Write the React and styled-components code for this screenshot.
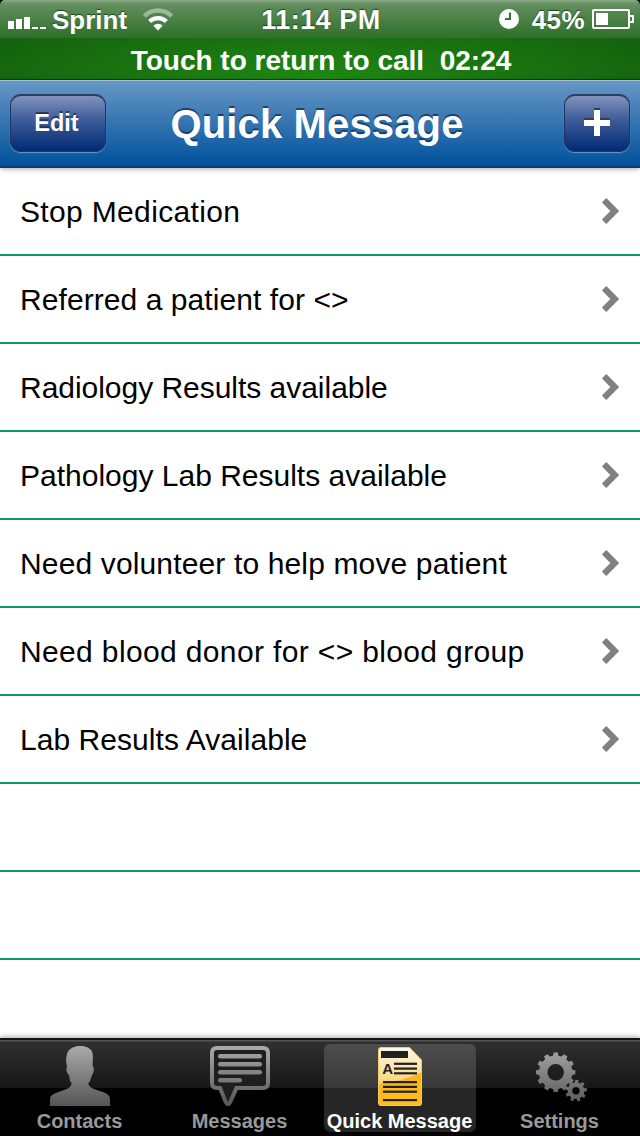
import React from "react";
import styled, { createGlobalStyle } from "styled-components";

const messages = [
  { text: "Stop Medication", tracking: 0.34 },
  { text: "Referred a patient for <>", tracking: 0.07 },
  { text: "Radiology Results available", tracking: -0.03 },
  { text: "Pathology Lab Results available", tracking: 0 },
  { text: "Need volunteer to help move patient", tracking: 0.14 },
  { text: "Need blood donor for <> blood group", tracking: 0.36 },
  { text: "Lab Results Available", tracking: 0.05 },
  { text: "" },
  { text: "" },
  { text: "" },
];

const tabs = [
  { label: "Contacts", Icon: ContactIcon },
  { label: "Messages", Icon: MessagesIcon },
  { label: "Quick Message", Icon: DocumentIcon, active: true },
  { label: "Settings", Icon: GearsIcon },
];

export default function App() {
  return (
    <>
      <GlobalStyle />
      <Screen>
        <StatusBar>
          <Carrier>
            <SignalIcon />
            <StatusText>Sprint</StatusText>
            <WifiIcon />
          </Carrier>
          <StatusText $size={27} $tracking={0.5}>11:14 PM</StatusText>
          <Power>
            <ClockIcon />
            <StatusText $tracking={0.4}>45%</StatusText>
            <BatteryIcon />
          </Power>
        </StatusBar>
        <CallBar>Touch to return to call&nbsp; 02:24</CallBar>
        <NavBar>
          <NavButton $width={96}>Edit</NavButton>
          <Title>Quick Message</Title>
          <NavButton $width={66} aria-label="Add">
            <PlusIcon />
          </NavButton>
        </NavBar>
        <List>
          {messages.map(({ text, tracking }, i) => (
            <Row key={i}>
              <RowText $tracking={tracking}>{text}</RowText>
              {text && <Chevron />}
            </Row>
          ))}
        </List>
        <TabBar>
          {tabs.map(({ label, Icon, active }) => (
            <Tab key={label} $active={active}>
              <Icon />
              <TabLabel $active={active}>{label}</TabLabel>
            </Tab>
          ))}
        </TabBar>
      </Screen>
    </>
  );
}

function SignalIcon() {
  return (
    <svg width="38" height="14" viewBox="0 0 38 14" fill="#fff">
      <rect x="0" y="6" width="6" height="8" />
      <rect x="8" y="4" width="6" height="10" />
      <rect x="16" y="2" width="6" height="12" />
      <rect x="24" y="12" width="6" height="2" />
      <rect x="32" y="12" width="6" height="2" />
    </svg>
  );
}

function WifiIcon() {
  return (
    <svg width="32" height="24" viewBox="0 0 32 24" fill="none">
      <path d="M2.3 9.2 A19.4 19.4 0 0 1 29.7 9.2" stroke="#fff" strokeOpacity=".42" strokeWidth="4.4" />
      <path d="M7.6 14.6 A12 12 0 0 1 24.4 14.6" stroke="#fff" strokeWidth="4.2" />
      <path d="M11.3 18.8 A6.6 6.6 0 0 1 20.7 18.8 L16 23.6 Z" fill="#fff" />
    </svg>
  );
}

function ClockIcon() {
  return (
    <svg width="20" height="20" viewBox="0 0 20 20">
      <circle cx="10" cy="10" r="10" fill="#fff" />
      <path d="M11 3.5 V10 H6" stroke="#3c6f38" strokeWidth="2" fill="none" />
    </svg>
  );
}

function BatteryIcon() {
  return (
    <svg width="42" height="20" viewBox="0 0 42 20" fill="none">
      <rect x="1" y="1" width="36" height="18" rx="1" stroke="#fff" strokeWidth="2" />
      <path d="M38 7 H41 V13 H38" stroke="#fff" strokeWidth="2" />
      <rect x="4" y="4" width="12" height="12" fill="#fff" />
    </svg>
  );
}

function PlusIcon() {
  return (
    <svg width="26" height="28" viewBox="0 0 26 28">
      <path d="M10 0 H16 V10 H26 V16 H16 V26 H10 V16 H0 V10 H10 Z" fill="#363e55" />
      <path d="M10 2 H16 V12 H26 V18 H16 V28 H10 V18 H0 V12 H10 Z" fill="#fff" />
    </svg>
  );
}

function Chevron() {
  return (
    <svg width="18" height="26" viewBox="0 0 18 26" fill="none">
      <path d="M2.1 2.2 L12.8 13 L2.1 23.8" stroke="#808080" strokeWidth="6.2" />
    </svg>
  );
}

function GreyGradient({ id }) {
  return (
    <linearGradient id={id} gradientUnits="userSpaceOnUse" x1="0" y1="0" x2="0" y2="60">
      <stop offset="0" stopColor="#aaa" />
      <stop offset="1" stopColor="#555" />
    </linearGradient>
  );
}

function ContactIcon() {
  return (
    <TabIcon viewBox="0 0 60 60">
      <defs>
        <GreyGradient id="contactFill" />
      </defs>
      <path
        fill="url(#contactFill)"
        d="M30 0 C36 0 39 2 41 4 C43 6 43 9 42.8 14 L42.6 20 C44.5 21.5 44.2 25 42.5 28.5 C41.5 29.5 41.5 31 40.5 33.5 L40 35.5 L38.2 37 C38.5 40 41 42 44 43 L54 46.5 C58 48 60 50 60 53 V60 H0 V53 C0 50 2 48.5 6 47 L16 43.3 C19.5 42 21.5 40 21.6 37 L20 35 L19.2 29.5 C16.5 27 15.7 23.5 17 20.5 C15.5 15 16 10 17.5 6.5 C19.5 2.5 24 0 30 0 Z"
      />
    </TabIcon>
  );
}

function MessagesIcon() {
  return (
    <TabIcon viewBox="0 0 60 60">
      <defs>
        <GreyGradient id="messageStroke" />
      </defs>
      <path
        d="M7 2 H53 Q58 2 58 7 V37 Q58 42 53 42 H26.5 L20 56.5 Q18 60 16 56.5 L10 42 H7 Q2 42 2 37 V7 Q2 2 7 2 Z"
        fill="#1e1e1e"
        stroke="url(#messageStroke)"
        strokeWidth="4"
      />
      <g fill="url(#messageStroke)">
        <rect x="8" y="8" width="44" height="4.4" rx="2.2" />
        <rect x="8" y="16" width="44" height="4.4" rx="2.2" />
        <rect x="8" y="24" width="44" height="4.4" rx="2.2" />
        <rect x="8" y="32" width="24" height="4.4" rx="2.2" />
      </g>
    </TabIcon>
  );
}

function DocumentIcon() {
  return (
    <TabIcon viewBox="0 0 60 60">
      <defs>
        <linearGradient id="paper" x1="0" y1="0" x2="0" y2="1">
          <stop offset="0" stopColor="#fffaf0" />
          <stop offset=".6" stopColor="#fbd67c" />
        </linearGradient>
        <linearGradient id="paperLow" x1="0" y1="0" x2="0" y2="1">
          <stop offset="0" stopColor="#fdb515" />
          <stop offset="1" stopColor="#ffbd1c" />
        </linearGradient>
        <clipPath id="page">
          <path d="M11 1.5 H39.5 L51.5 14 V57 Q51.5 59.5 49 59.5 H11 Q8.5 59.5 8.5 57 V4 Q8.5 1.5 11 1.5 Z" />
        </clipPath>
      </defs>
      <g clipPath="url(#page)">
        <rect width="60" height="60" fill="url(#paper)" />
        <path d="M8 38 Q34 35 52 26 V60 H8 Z" fill="url(#paperLow)" />
      </g>
      <path
        d="M11 1.5 H39.5 L51.5 14 V57 Q51.5 59.5 49 59.5 H11 Q8.5 59.5 8.5 57 V4 Q8.5 1.5 11 1.5 Z"
        fill="none"
        stroke="#f3c96b"
        strokeWidth="1"
      />
      <rect x="11" y="5" width="27" height="7" fill="#222" />
      <g fill="#222">
        <rect x="24" y="16.7" width="23" height="2.2" />
        <rect x="24" y="21.5" width="23" height="2.2" />
        <rect x="24" y="26.2" width="23" height="2.2" />
        <rect x="13" y="35" width="34" height="2.2" />
        <rect x="13" y="39.8" width="34" height="2.2" />
        <rect x="13" y="44.6" width="34" height="2.2" />
        <rect x="13" y="53" width="34" height="2.2" />
      </g>
      <PageLetter x="12.2" y="28">A</PageLetter>
    </TabIcon>
  );
}

// Closed outline of a gear with a round hole in it
function gearPath(cx, cy, outer, root, hole, teeth, turn = 0) {
  const step = (Math.PI * 2) / teeth;
  const at = (r, a) => `${(cx + r * Math.cos(a)).toFixed(2)} ${(cy + r * Math.sin(a)).toFixed(2)}`;
  let d = "";
  for (let i = 0; i < teeth; i++) {
    const a = i * step + turn;
    d += `${i ? "L" : "M"}${at(root, a - step * 0.3)} L${at(outer, a - step * 0.2)} `;
    d += `L${at(outer, a + step * 0.2)} L${at(root, a + step * 0.3)} `;
  }
  d += `Z M${cx - hole} ${cy} a${hole} ${hole} 0 1 0 ${hole * 2} 0 a${hole} ${hole} 0 1 0 ${-hole * 2} 0 Z`;
  return d;
}

function GearsIcon() {
  return (
    <TabIcon viewBox="0 0 60 60">
      <defs>
        <GreyGradient id="gearFill" />
      </defs>
      <g fill="url(#gearFill)" fillRule="evenodd">
        <path d={gearPath(25.7, 26.3, 19.8, 16.8, 8.3, 12, -Math.PI / 2)} />
        <path d={gearPath(46, 44.7, 10.9, 8.4, 3.7, 9, -0.1)} />
      </g>
    </TabIcon>
  );
}

const GlobalStyle = createGlobalStyle`
  * {
    box-sizing: border-box;
  }

  body {
    margin: 0;
    background: #000;
    font-family: "Liberation Sans", Arial, sans-serif;
  }
`;

const Screen = styled.div`
  display: flex;
  flex-direction: column;
  width: 640px;
  height: 1136px;
  overflow: hidden;
  background: #000;
`;

const StatusBar = styled.header`
  display: grid;
  grid-template-columns: 1fr auto 1fr;
  align-items: center;
  flex: none;
  height: 38px;
  padding: 1px 6px 0 8px;
  border-radius: 5px 5px 0 0;
  background: linear-gradient(#8fae8b 0, #6b9468 3px, #5c8b58 8px, #2e7029 38px);
`;

const Carrier = styled.div`
  display: flex;
  align-items: center;
  gap: 6px;

  svg:first-child {
    margin-top: 5px;
  }

  svg:last-child {
    margin: 0 0 2px 9px;
  }
`;

const Power = styled.div`
  display: flex;
  align-items: center;
  justify-content: flex-end;
  gap: 7px;

  svg {
    margin-bottom: 2px;
  }

  svg:first-child {
    margin-right: 6px;
  }
`;

const StatusText = styled.span`
  font-size: ${({ $size }) => $size || 26}px;
  font-weight: bold;
  letter-spacing: ${({ $tracking }) => $tracking || 0}px;
  line-height: 36px;
  color: #fff;
  text-shadow: 0 -1px 1px rgba(0, 0, 0, 0.55);
`;

const CallBar = styled.div`
  flex: none;
  height: 42px;
  padding-left: 2px;
  border-bottom: 1px solid #0c4509;
  background: radial-gradient(ellipse 360px 70px at 50% 100%, #1f8814, #15630e);
  color: #fff;
  font-size: 28px;
  font-weight: bold;
  line-height: 46px;
  text-align: center;
`;

const NavBar = styled.nav`
  display: grid;
  grid-template-columns: 1fr auto 1fr;
  align-items: center;
  flex: none;
  position: relative;
  height: 88px;
  padding: 0 10px 2px;
  border-top: 1px solid #a3c0dc;
  border-bottom: 2px solid #043c72;
  background: linear-gradient(#6797c6, #00519b);
  box-shadow: 0 1px 5px rgba(0, 0, 0, 0.35);
`;

const NavButton = styled.button`
  display: flex;
  align-items: center;
  justify-content: center;
  width: ${({ $width }) => $width}px;
  height: 58px;
  padding: 0 3px 0 0;
  border: 1px solid #1f3563;
  border-top: 2px solid #2f3c5c;
  border-radius: 11px;
  background: linear-gradient(#8093bc, #3c5a98 45%, #012a74);
  box-shadow: 0 1px 1px rgba(160, 195, 230, 0.6);
  color: #fff;
  font: bold 23.5px "Liberation Sans", Arial, sans-serif;
  text-shadow: 0 -2px 0 rgba(30, 40, 70, 0.75);

  &:last-child {
    justify-self: end;
    padding: 0 0 3px;
  }
`;

const Title = styled.h1`
  margin: 4px 6px 0 0;
  color: #fff;
  font-size: 40px;
  font-weight: bold;
  letter-spacing: 0.15px;
  text-shadow: 0 -2px 0 rgba(20, 50, 85, 0.8);
`;

const List = styled.ul`
  flex: 1;
  min-height: 0;
  margin: 0;
  padding: 0;
  overflow: hidden;
  list-style: none;
  background: #fff;
`;

const Row = styled.li`
  display: flex;
  align-items: center;
  justify-content: space-between;
  height: 88px;
  padding: 0 20px;
  border-bottom: 2px solid #0a9d62;
`;

const RowText = styled.span`
  padding-top: 2px;
  color: #000;
  font-size: 30px;
  letter-spacing: ${({ $tracking }) => $tracking || 0}px;
  white-space: nowrap;
`;

const TabBar = styled.footer`
  display: grid;
  grid-template-columns: repeat(4, 160px);
  flex: none;
  position: relative;
  height: 98px;
  padding: 4px 0;
  border-top: 2px solid #151515;
  background: linear-gradient(#555 0, #555 1px, #303030 2px, #161616 48px, #000 48px);
  box-shadow: 0 -1px 5px rgba(0, 0, 0, 0.35);
`;

const Tab = styled.div`
  display: flex;
  flex-direction: column;
  align-items: center;
  height: 88px;
  margin: 0 4px;
  padding-top: 2px;
  border-radius: 6px;
  background: ${({ $active }) => ($active ? "rgba(255, 255, 255, 0.15)" : "none")};
`;

const TabIcon = styled.svg`
  flex: none;
  width: 60px;
  height: 60px;
`;

const TabLabel = styled.span`
  padding-right: 1px;
  color: ${({ $active }) => ($active ? "#fff" : "#999")};
  font-size: 20px;
  font-weight: bold;
  line-height: 30px;
  white-space: nowrap;
`;

const PageLetter = styled.text`
  fill: #222;
  font-size: 15px;
  font-weight: bold;
`;
